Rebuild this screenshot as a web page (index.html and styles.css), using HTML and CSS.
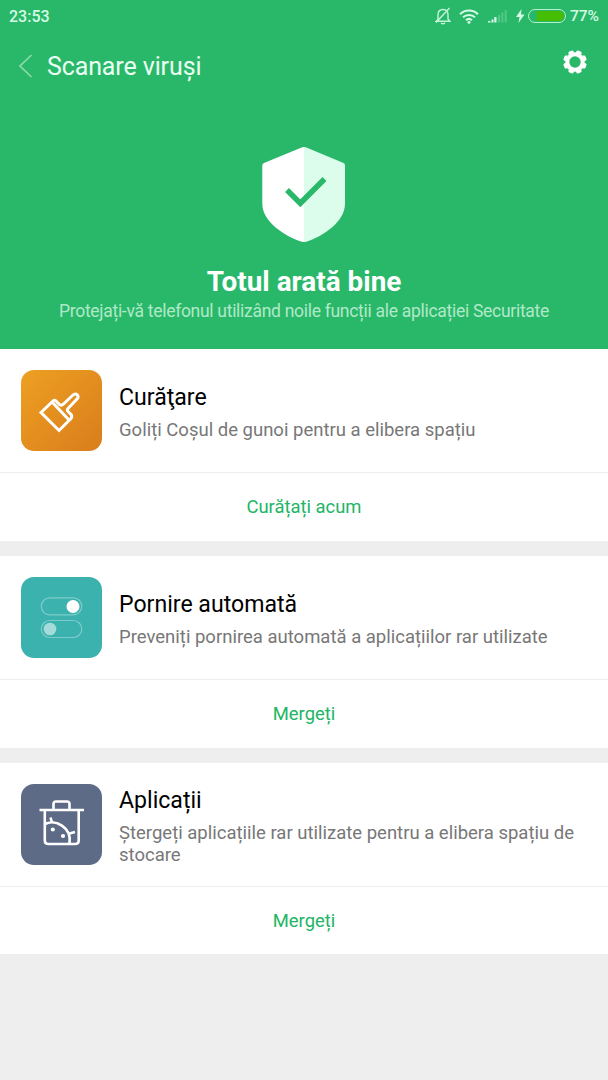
FILE: index.html
```html
<!DOCTYPE html>
<html lang="ro">
<head>
  <meta charset="UTF-8">
  <title>Scanare viruși</title>
  <link rel="stylesheet" href="styles.css">
</head>
<body>

  <header class="hero">
    <div class="status-bar">
      <span class="time">23:53</span>
      <div class="status-icons">
        <svg class="bell" width="16" height="18" viewBox="0 0 16 18">
          <path d="M3 12.5V8C3 4.5 4.8 2.5 8 2.5S13 4.5 13 8v4l2 2.3H1.2L3 12.5M6 16q2 1.5 4 0M1 15.5L14.5 1" />
        </svg>
        <svg class="wifi" width="20" height="15" viewBox="0 0 20 15">
          <path d="M1 5.2a13 13 0 0 1 18 0M4 8.3a8.7 8.7 0 0 1 12 0M7 11.2a4.5 4.5 0 0 1 6 0" />
          <circle cx="10" cy="13.3" r="1.5" />
        </svg>
        <svg class="signal" width="19" height="14" viewBox="0 0 19 14">
          <path d="M0 12h2.500v1.500H0zM3.500 10.500h2v3h-2zM6.300 8h2.200v5.500H6.300z" />
          <path class="dim" d="M10 6h2v7.500h-2zM13.300 3.500h2v10h-2zM16.700 1h2v12.500h-2z" />
        </svg>
        <svg class="bolt" width="9" height="14" viewBox="0 0 9 14">
          <path d="M5.500 0L0 8h3.500L2.500 14L8.500 5.500H5z" />
        </svg>
        <div class="battery"><div class="level"></div></div>
        <span class="percent">77%</span>
      </div>
    </div>

    <div class="title-bar">
      <svg class="back" width="14" height="24" viewBox="0 0 14 24">
        <path d="M12.500 1L1 12l11.500 11" />
      </svg>
      <h1>Scanare viruși</h1>
      <svg class="gear" width="24" height="24" viewBox="-12 -12 24 24">
        <circle r="7.7" />
        <g class="teeth">
          <path id="tooth" d="M-3.200 -9L-2.400 -11.300Q-2.200 -11.800 -1.600 -11.800H1.600Q2.200 -11.800 2.400 -11.300L3.200 -9z" transform="rotate(22.500)" />
          <use href="#tooth" transform="rotate(45)" />
          <use href="#tooth" transform="rotate(90)" />
          <use href="#tooth" transform="rotate(135)" />
          <use href="#tooth" transform="rotate(180)" />
          <use href="#tooth" transform="rotate(225)" />
          <use href="#tooth" transform="rotate(270)" />
          <use href="#tooth" transform="rotate(315)" />
        </g>
      </svg>
    </div>

    <svg class="shield" width="84" height="96" viewBox="0 0 84 96">
      <path fill="#fff" d="M42 0Q40.500 0 39 .7L2 16Q0.300 16.500 0.300 18.500V56.500C0.300 75.500 24 89.500 39 94.500Q40.500 95 42 95z" />
      <path fill="#dcfdec" d="M42 0Q43.500 0 45 .7L81.500 16Q83 16.500 83 18.500V56.500C83 75.500 60 89.500 45 94.500Q43.500 95 42 95z" />
      <path class="check" d="M25 43L38.300 56.300L62.500 32" />
    </svg>
    <h2>Totul arată bine</h2>
    <p>Protejați-vă telefonul utilizând noile funcții ale aplicației Securitate</p>
  </header>

  <section class="card">
    <div class="card-head">
      <div class="icon orange">
        <svg width="81" height="81" viewBox="0 0 81 81">
          <path d="M20 42.500L32 31Q33.500 29.500 35 31L38.500 34.500Q40.500 36 42.500 34L52 25C55 22 58.800 26 56 29L47 38.500Q45.500 40 47.500 42L50 44.500Q51.500 46.500 50 48.500L38 60.500zM31 32L48.500 50.500" />
        </svg>
      </div>
      <div class="info">
        <h3>Curăţare</h3>
        <p>Goliți Coșul de gunoi pentru a elibera spațiu</p>
      </div>
    </div>
    <a class="action">Curățați acum</a>
  </section>

  <section class="card">
    <div class="card-head">
      <div class="icon teal">
        <svg width="81" height="81" viewBox="0 0 81 81">
          <g class="track">
            <rect x="20.300" y="20.800" width="40.500" height="17" rx="8.500" />
            <rect x="20.300" y="43.500" width="40.500" height="17" rx="8.500" />
          </g>
          <circle cx="52" cy="29.500" r="6.500" class="knob" />
          <circle cx="29" cy="52" r="6.300" class="knob off" />
        </svg>
      </div>
      <div class="info">
        <h3>Pornire automată</h3>
        <p>Preveniți pornirea automată a aplicațiilor rar utilizate</p>
      </div>
    </div>
    <a class="action">Mergeți</a>
  </section>

  <section class="card last">
    <div class="card-head">
      <div class="icon slate">
        <svg width="81" height="81" viewBox="0 0 81 81">
          <path d="M18.500 26H63M32.500 25.500V20Q32.500 17.500 35 17.500H46Q48.500 17.500 48.500 20V25.500M23.800 27V56.500Q23.800 60 27.300 60H54.200Q57.700 60 57.700 56.500V27" />
          <path d="M24 40C34 35 51 43 48.500 59.500M31 38.500L29.500 33.500M48.500 49.500L54 48" />
          <circle cx="31.800" cy="45.500" r="2.100" class="eye" />
          <circle cx="42" cy="52" r="2.100" class="eye" />
        </svg>
      </div>
      <div class="info">
        <h3>Aplicații</h3>
        <p>Ștergeți aplicațiile rar utilizate pentru a elibera spațiu de stocare</p>
      </div>
    </div>
    <a class="action">Mergeți</a>
  </section>

</body>
</html>
```

FILE: styles.css
```css
* {
  box-sizing: border-box;
}

body {
  margin: 0;
  background-color: #eee;
  font-family: Roboto, "Liberation Sans", sans-serif;
}

h1, h2, h3, p {
  margin: 0;
  font-weight: normal;
}

svg {
  display: block;
  fill: none;
}

.hero {
  height: 349px;
  background-color: #29b869;
  text-align: center;
}

/* status bar */
.status-bar {
  display: flex;
  justify-content: space-between;
  align-items: center;
  height: 32px;
  padding: 0 9px;
  color: #d5fbe5;
  font-size: 15.5px;
  font-weight: 500;
}

.time {
  font-size: 16px;
}

.status-icons {
  display: flex;
  align-items: center;
}

.bell {
  margin-right: 8px;
  stroke: #c4f5d8;
  stroke-width: 1.4;
}

.wifi {
  margin-right: 9px;
  stroke: #d5fbe5;
  stroke-width: 2;
}

.wifi circle {
  fill: #d5fbe5;
  stroke: none;
}

.signal {
  margin-right: 9px;
  fill: #d5fbe5;
}

.dim {
  opacity: 0.25;
}

.bolt {
  margin-right: 3px;
  fill: #d5fbe5;
}

.battery {
  width: 38px;
  height: 14px;
  margin-right: 4px;
  padding: 1px 1px 1px 8px;
  border: 1px solid #b5efcb;
  border-radius: 7px;
}

.level {
  height: 10px;
  background-color: #46bd00;
  border-radius: 0 5px 5px 0;
}

/* title */
.title-bar {
  display: flex;
  align-items: center;
  height: 68px;
  padding: 0 21px 0 19px;
}

.back {
  margin-bottom: 1px;
  stroke: #8edcae;
  stroke-width: 1.6;
}

.title-bar h1 {
  flex: 1;
  margin-left: 14px;
  color: #e9fff2;
  font-size: 25px;
  letter-spacing: -0.12px;
  text-align: left;
}

.gear {
  margin-bottom: 8px;
}

.gear circle {
  stroke: #fff;
  stroke-width: 4;
}

.gear .teeth {
  fill: #fff;
}

.shield {
  margin: 47px auto 0 262px;
}

.check {
  stroke: #29b869;
  stroke-width: 5.5;
}

.hero h2 {
  margin-top: 22px;
  color: #fff;
  font-size: 27.9px;
  font-weight: bold;
  line-height: 34px;
}

.hero p {
  color: #b0e9c8;
  font-size: 17.5px;
  letter-spacing: -0.29px;
  line-height: 24px;
}

/* cards */
.card {
  height: 192px;
  margin-bottom: 15px;
  background-color: #fff;
}

.card-head {
  display: flex;
  align-items: center;
  height: 124px;
  padding: 0 21px;
  border-bottom: 1px solid #eee;
}

.icon {
  flex: none;
  width: 81px;
  height: 81px;
  margin-right: 17px;
  border-radius: 13px;
}

.icon svg {
  stroke: #fff;
  stroke-width: 3;
}

.orange {
  background: linear-gradient(135deg, #eda022, #d97d1c);
}

.teal {
  background-color: #3cb2ae;
}

.slate {
  background-color: #5e6b87;
}

.teal .track {
  stroke: #7dccc9;
  stroke-width: 1.2;
}

.teal .knob {
  fill: #fff;
  stroke: none;
}

.teal .off {
  fill: #a5dcda;
}

.slate svg {
  stroke-width: 2.6;
}

.slate .eye {
  fill: #fff;
  stroke: none;
}

.info {
  padding-top: 2px;
}

.info h3 {
  color: #000;
  font-size: 23.1px;
  line-height: 30px;
}

.info p {
  margin-top: 6px;
  color: #777;
  font-size: 18.5px;
  line-height: 22px;
}

.action {
  display: block;
  color: #21b565;
  font-size: 18.4px;
  line-height: 67px;
  text-align: center;
}

.last {
  height: 191px;
}
```
